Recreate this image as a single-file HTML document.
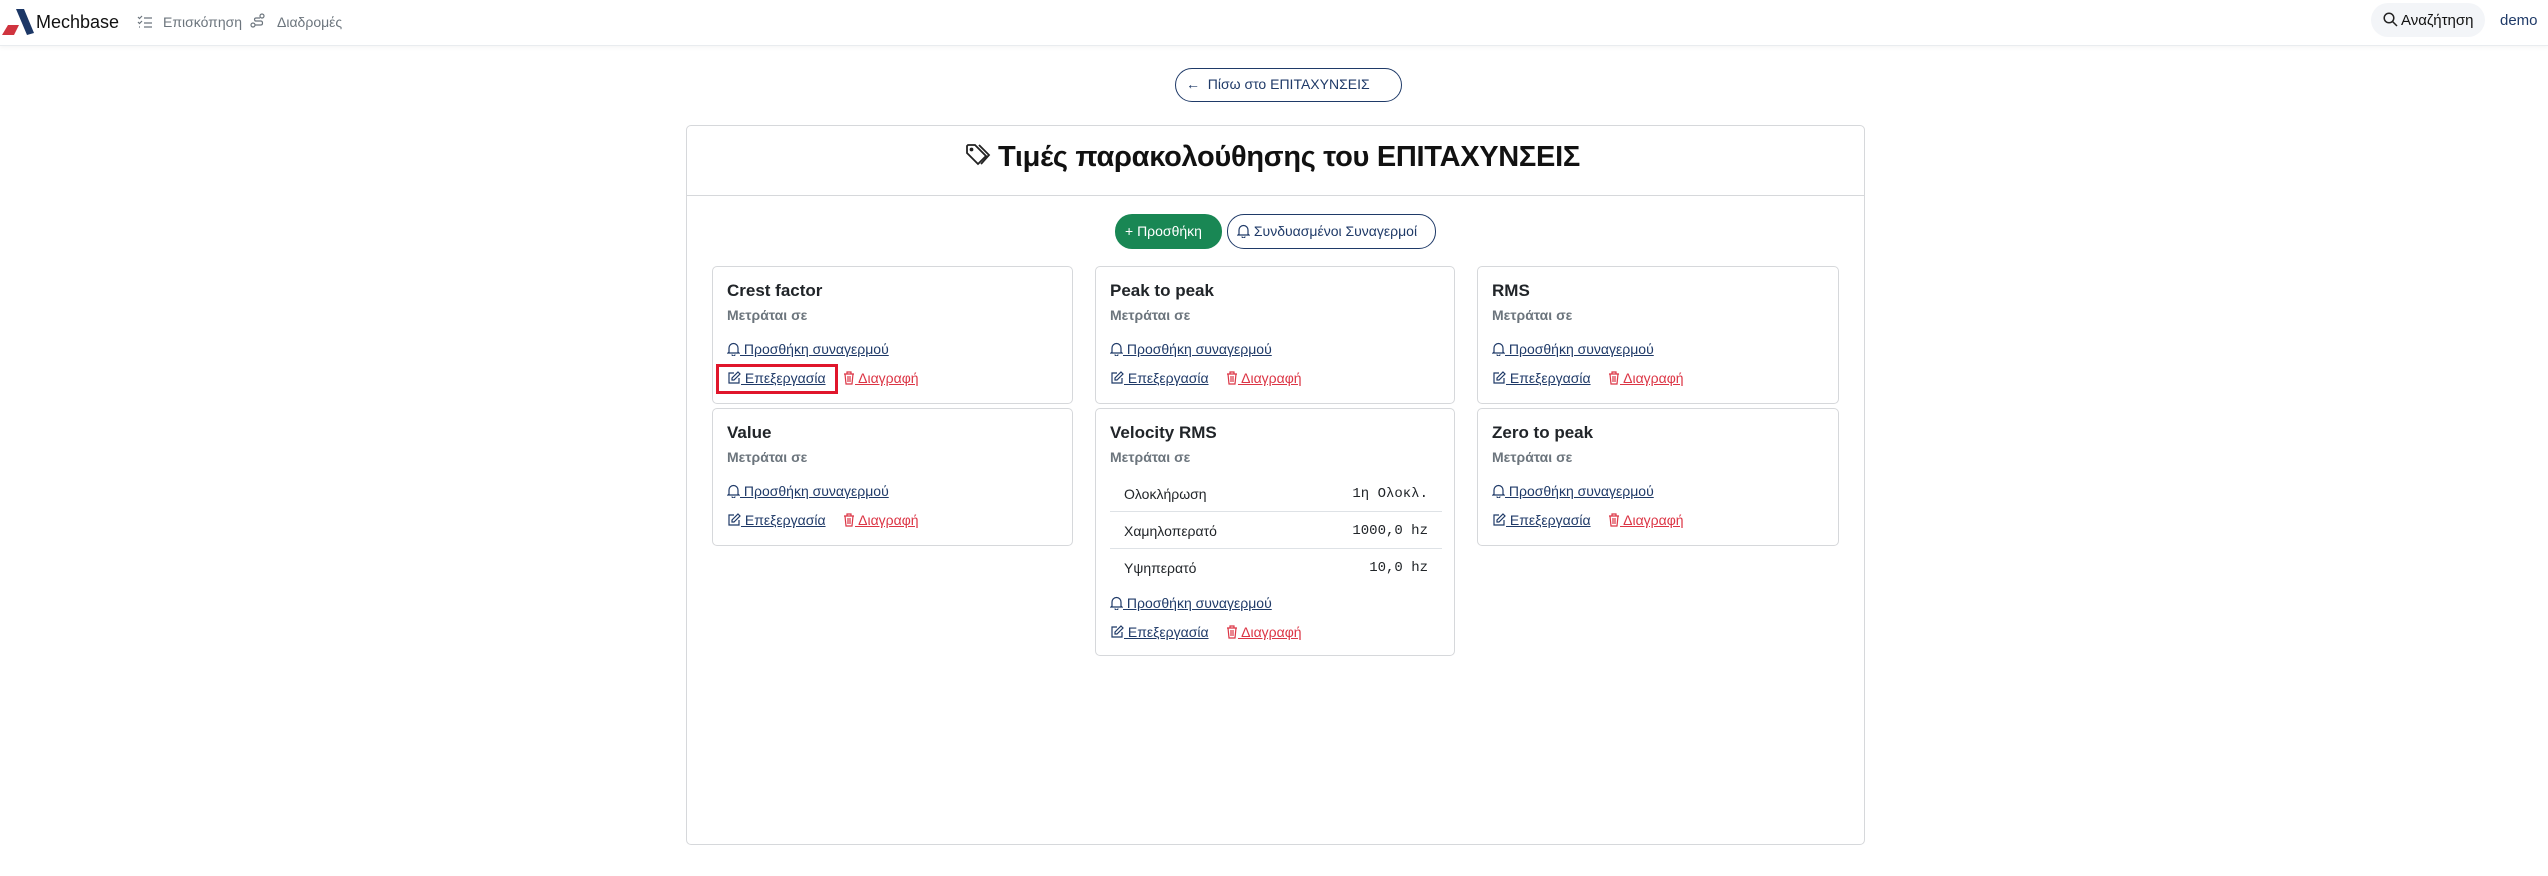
<!DOCTYPE html>
<html><head><meta charset="utf-8"><style>
*{box-sizing:border-box;margin:0;padding:0}
body{width:2548px;height:876px;background:#fff;font-family:"Liberation Sans","DejaVu Sans",sans-serif;position:relative;overflow:hidden;color:#212529}
.a{position:absolute;white-space:nowrap}
.nav{position:absolute;left:0;top:0;width:2548px;height:46px;border-bottom:1px solid #e9ecef;box-shadow:0 2px 4px rgba(0,0,0,.04)}
.card{position:absolute;border:1px solid #d6d8db;border-radius:5px;background:#fff}
.ct{position:absolute;left:14px;top:14px;font-size:17px;font-weight:bold;color:#212529}
.cs{position:absolute;left:14px;top:40px;font-size:14px;font-weight:bold;color:#6c757d}
.lk{position:absolute;left:14px;font-size:14px;color:#1f3a68;text-decoration:underline;white-space:nowrap}
.rd{color:#dc3545}
svg{vertical-align:-2px}
.row{position:absolute;left:14px;width:332px;height:37px;font-size:14px}
.row span{position:absolute;top:11px}
.row .v{right:14px;font-family:"Liberation Mono",monospace;font-size:14px}
</style></head><body>
<div class="nav">
<svg class="a" style="left:2px;top:9px" width="32" height="26" viewBox="0 0 32 26"><path d="M14 0 L22 0 L32 24 L25 26 Z" fill="#1c3766"/><path d="M0 26 L6 16 L17 16 L12 26 Z" fill="#d0343f"/></svg>
<div class="a" style="left:36px;top:12px;font-size:18px;color:#111">Mechbase</div>
<svg class="a" style="left:137px;top:15px" width="15" height="14" viewBox="0 0 15 14" fill="none" stroke="#6c757d" stroke-width="1.2"><path d="M1 2l1.5 1.5L5 1M1 7l1.5 1.5L5 6M7 3h8M7 8h8M2 12h1M7 12h8"/></svg>
<div class="a" style="left:163px;top:14px;font-size:14px;color:#6c757d">Επισκόπηση</div>
<svg class="a" style="left:250px;top:13px" width="16" height="16" viewBox="0 0 16 16" fill="none" stroke="#6c757d" stroke-width="1.2"><circle cx="3" cy="12" r="2"/><circle cx="12" cy="3" r="2"/><path d="M5 12h6c2 0 2-4 0-4H6c-2 0-2-3 0-3h4"/></svg>
<div class="a" style="left:277px;top:14px;font-size:14px;color:#6c757d">Διαδρομές</div>
<div class="a" style="left:2371px;top:3px;width:114px;height:34px;border-radius:17px;background:#f3f5f8"></div>
<svg class="a" style="left:2383px;top:12px" width="15" height="15" viewBox="0 0 15 15" fill="none" stroke="#222" stroke-width="1.5"><circle cx="6" cy="6" r="4.8"/><path d="M9.5 9.5L14 14"/></svg>
<div class="a" style="left:2401px;top:12px;font-size:15px;color:#111">Αναζήτηση</div>
<div class="a" style="left:2500px;top:12px;font-size:15px;color:#1f3a68">demo</div>
</div>

<div class="a" style="left:1175px;top:68px;width:227px;height:34px;border:1px solid #1f3a68;border-radius:17px"></div>
<div class="a" style="left:1186px;top:76px;font-size:14px;color:#1f3a68">←&nbsp; Πίσω στο ΕΠΙΤΑΧΥΝΣΕΙΣ</div>

<div class="card" style="left:686px;top:125px;width:1179px;height:720px">
<div style="position:absolute;left:0;top:69px;width:100%;border-top:1px solid #d6d8db"></div>
</div>
<svg class="a" style="left:965px;top:143px" width="28" height="26" viewBox="0 0 28 26" fill="none" stroke="#222" stroke-width="1.8"><path d="M2 3v7l11 11 8-8L10 2H3z"/><circle cx="6.5" cy="6.5" r="1" fill="#222"/><path d="M14 2l10 10-8 9"/></svg>
<div class="a" style="left:998px;top:141px;font-size:29px;font-weight:bold;color:#111;letter-spacing:-0.3px">Τιμές παρακολούθησης του ΕΠΙΤΑΧΥΝΣΕΙΣ</div>

<div class="a" style="left:1115px;top:214px;width:107px;height:35px;border-radius:17px;background:#198754"></div>
<div class="a" style="left:1125px;top:223px;font-size:14px;color:#fff">+ Προσθήκη</div>
<div class="a" style="left:1227px;top:214px;width:209px;height:35px;border-radius:17px;border:1px solid #1f3a68"></div>
<div class="a" style="left:1237px;top:223px;font-size:14px;color:#1f3a68"><svg width="13" height="14" viewBox="0 0 13 14" fill="none" stroke="#1f3a68" stroke-width="1.2"><path d="M2 10V6a4.5 4.5 0 019 0v4l1 1H1z M5 12.5a1.5 1.5 0 003 0"/></svg> Συνδυασμένοι Συναγερμοί</div>

<div class="card" style="left:712px;top:266px;width:361px;height:138px">
<div class="ct">Crest factor</div><div class="cs">Μετράται σε</div>
<div class="lk" style="top:74px"><svg width="13" height="14" viewBox="0 0 13 14" fill="none" stroke="#1f3a68" stroke-width="1.2"><path d="M2 10V6a4.5 4.5 0 019 0v4l1 1H1z M5 12.5a1.5 1.5 0 003 0"/></svg> Προσθήκη συναγερμού</div>
<div class="lk" style="top:103px"><svg width="14" height="14" viewBox="0 0 14 14" fill="none" stroke="#1f3a68" stroke-width="1.2"><path d="M7 2H2v10h10V7M11 1l2 2-6 6H5V7z"/></svg> Επεξεργασία</div>
<div class="lk rd" style="top:103px;left:130px"><svg width="12" height="14" viewBox="0 0 12 14" fill="none" stroke="#dc3545" stroke-width="1.2"><path d="M1 3h10M4 3V1h4v2M2 3l1 10h6l1-10M5 5v6M7 5v6"/></svg> Διαγραφή</div>
</div>
<div class="a" style="left:716px;top:364px;width:122px;height:30px;border:3px solid #e0162b"></div>

<div class="card" style="left:1095px;top:266px;width:360px;height:138px">
<div class="ct">Peak to peak</div><div class="cs">Μετράται σε</div>
<div class="lk" style="top:74px"><svg width="13" height="14" viewBox="0 0 13 14" fill="none" stroke="#1f3a68" stroke-width="1.2"><path d="M2 10V6a4.5 4.5 0 019 0v4l1 1H1z M5 12.5a1.5 1.5 0 003 0"/></svg> Προσθήκη συναγερμού</div>
<div class="lk" style="top:103px"><svg width="14" height="14" viewBox="0 0 14 14" fill="none" stroke="#1f3a68" stroke-width="1.2"><path d="M7 2H2v10h10V7M11 1l2 2-6 6H5V7z"/></svg> Επεξεργασία</div>
<div class="lk rd" style="top:103px;left:130px"><svg width="12" height="14" viewBox="0 0 12 14" fill="none" stroke="#dc3545" stroke-width="1.2"><path d="M1 3h10M4 3V1h4v2M2 3l1 10h6l1-10M5 5v6M7 5v6"/></svg> Διαγραφή</div>
</div>

<div class="card" style="left:1477px;top:266px;width:362px;height:138px">
<div class="ct">RMS</div><div class="cs">Μετράται σε</div>
<div class="lk" style="top:74px"><svg width="13" height="14" viewBox="0 0 13 14" fill="none" stroke="#1f3a68" stroke-width="1.2"><path d="M2 10V6a4.5 4.5 0 019 0v4l1 1H1z M5 12.5a1.5 1.5 0 003 0"/></svg> Προσθήκη συναγερμού</div>
<div class="lk" style="top:103px"><svg width="14" height="14" viewBox="0 0 14 14" fill="none" stroke="#1f3a68" stroke-width="1.2"><path d="M7 2H2v10h10V7M11 1l2 2-6 6H5V7z"/></svg> Επεξεργασία</div>
<div class="lk rd" style="top:103px;left:130px"><svg width="12" height="14" viewBox="0 0 12 14" fill="none" stroke="#dc3545" stroke-width="1.2"><path d="M1 3h10M4 3V1h4v2M2 3l1 10h6l1-10M5 5v6M7 5v6"/></svg> Διαγραφή</div>
</div>

<div class="card" style="left:712px;top:408px;width:361px;height:138px">
<div class="ct">Value</div><div class="cs">Μετράται σε</div>
<div class="lk" style="top:74px"><svg width="13" height="14" viewBox="0 0 13 14" fill="none" stroke="#1f3a68" stroke-width="1.2"><path d="M2 10V6a4.5 4.5 0 019 0v4l1 1H1z M5 12.5a1.5 1.5 0 003 0"/></svg> Προσθήκη συναγερμού</div>
<div class="lk" style="top:103px"><svg width="14" height="14" viewBox="0 0 14 14" fill="none" stroke="#1f3a68" stroke-width="1.2"><path d="M7 2H2v10h10V7M11 1l2 2-6 6H5V7z"/></svg> Επεξεργασία</div>
<div class="lk rd" style="top:103px;left:130px"><svg width="12" height="14" viewBox="0 0 12 14" fill="none" stroke="#dc3545" stroke-width="1.2"><path d="M1 3h10M4 3V1h4v2M2 3l1 10h6l1-10M5 5v6M7 5v6"/></svg> Διαγραφή</div>
</div>

<div class="card" style="left:1095px;top:408px;width:360px;height:248px">
<div class="ct">Velocity RMS</div><div class="cs">Μετράται σε</div>
<div class="row" style="top:66px;border-bottom:1px solid #dee2e6"><span style="left:14px">Ολοκλήρωση</span><span class="v">1η Ολοκλ.</span></div>
<div class="row" style="top:103px;border-bottom:1px solid #dee2e6"><span style="left:14px">Χαμηλοπερατό</span><span class="v">1000,0 hz</span></div>
<div class="row" style="top:140px"><span style="left:14px">Υψηπερατό</span><span class="v">10,0 hz</span></div>
<div class="lk" style="top:186px"><svg width="13" height="14" viewBox="0 0 13 14" fill="none" stroke="#1f3a68" stroke-width="1.2"><path d="M2 10V6a4.5 4.5 0 019 0v4l1 1H1z M5 12.5a1.5 1.5 0 003 0"/></svg> Προσθήκη συναγερμού</div>
<div class="lk" style="top:215px"><svg width="14" height="14" viewBox="0 0 14 14" fill="none" stroke="#1f3a68" stroke-width="1.2"><path d="M7 2H2v10h10V7M11 1l2 2-6 6H5V7z"/></svg> Επεξεργασία</div>
<div class="lk rd" style="top:215px;left:130px"><svg width="12" height="14" viewBox="0 0 12 14" fill="none" stroke="#dc3545" stroke-width="1.2"><path d="M1 3h10M4 3V1h4v2M2 3l1 10h6l1-10M5 5v6M7 5v6"/></svg> Διαγραφή</div>
</div>

<div class="card" style="left:1477px;top:408px;width:362px;height:138px">
<div class="ct">Zero to peak</div><div class="cs">Μετράται σε</div>
<div class="lk" style="top:74px"><svg width="13" height="14" viewBox="0 0 13 14" fill="none" stroke="#1f3a68" stroke-width="1.2"><path d="M2 10V6a4.5 4.5 0 019 0v4l1 1H1z M5 12.5a1.5 1.5 0 003 0"/></svg> Προσθήκη συναγερμού</div>
<div class="lk" style="top:103px"><svg width="14" height="14" viewBox="0 0 14 14" fill="none" stroke="#1f3a68" stroke-width="1.2"><path d="M7 2H2v10h10V7M11 1l2 2-6 6H5V7z"/></svg> Επεξεργασία</div>
<div class="lk rd" style="top:103px;left:130px"><svg width="12" height="14" viewBox="0 0 12 14" fill="none" stroke="#dc3545" stroke-width="1.2"><path d="M1 3h10M4 3V1h4v2M2 3l1 10h6l1-10M5 5v6M7 5v6"/></svg> Διαγραφή</div>
</div>
</body></html>
